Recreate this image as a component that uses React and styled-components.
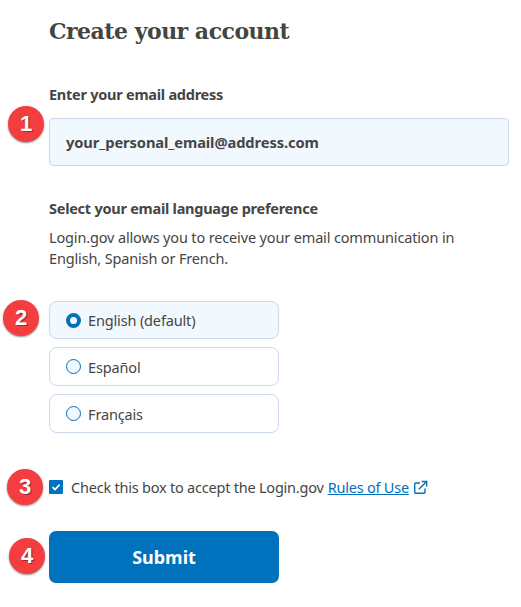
import styled, { createGlobalStyle } from "styled-components"

const GlobalStyle = createGlobalStyle`
  html, body {
    margin: 0;
    padding: 0;
    background: #fff;
  }
`

const options = [
  { label: "English (default)", checked: true },
  { label: "Español" },
  { label: "Français" },
]

export default function App() {
  return (
    <>
      <GlobalStyle />
      <Page>
        <Title>Create your account</Title>

        <EmailField>
          <Label>Enter your email address</Label>
          <EmailBox>
            <Badge $left={-42} $top={-13}>1</Badge>
            your_personal_email@address.com
          </EmailBox>
        </EmailField>

        <LanguageField>
          <Label>Select your email language preference</Label>
          <Hint>
            Login.gov allows you to receive your email communication in
            <br />
            English, Spanish or French.
          </Hint>
          <Options>
            {options.map((item, i) => (
              <Option key={item.label} $checked={item.checked}>
                {i === 0 && <Badge $left={-47} $top={-2}>2</Badge>}
                <RadioDot $checked={item.checked} />
                {item.label}
              </Option>
            ))}
          </Options>
        </LanguageField>

        <TermsRow>
          <Badge $left={-42} $top={-7}>3</Badge>
          <CheckBox>
            <svg width="10" height="10" viewBox="0 0 10 10" fill="none">
              <path d="M1.5 5.2 4 7.5 8.6 2.6" stroke="#fff" strokeWidth="1.7" />
            </svg>
          </CheckBox>
          <span>Check this box to accept the Login.gov</span>
          <RulesLink href="#">Rules of Use</RulesLink>
          <svg width="15" height="15" viewBox="0 0 15 15" fill="none" stroke="#0071bc" strokeWidth="1.4">
            <path d="M7 3H2.7A1 1 0 0 0 1.7 4v8.3a1 1 0 0 0 1 1H11a1 1 0 0 0 1-1V8.5" />
            <path d="M5.8 9.3 13.2 1.9M8.7 1.5h5v5" />
          </svg>
        </TermsRow>

        <SubmitRow>
          <Badge $left={-40} $top={7}>4</Badge>
          <SubmitButton>Submit</SubmitButton>
        </SubmitRow>
      </Page>
    </>
  )
}

const Page = styled.div`
  width: 521px;
  height: 607px;
  box-sizing: border-box;
  padding: 14px 12px 0 49px;
  overflow: hidden;
  font-family: "Noto Sans", "Open Sans", sans-serif;
  color: #454545;
`

const Title = styled.h1`
  margin: 0;
  font-family: "DejaVu Serif", "Liberation Serif", serif;
  font-size: 22px;
  line-height: 34px;
  font-weight: 700;
  letter-spacing: -0.5px;
  color: #454540;
`

const EmailField = styled.div`
  margin-top: 35px;
`

const Label = styled.div`
  font-size: 14.5px;
  line-height: 22px;
  font-weight: 700;
  letter-spacing: -0.25px;
`

const EmailBox = styled.div`
  position: relative;
  margin-top: 13px;
  height: 48px;
  box-sizing: border-box;
  display: flex;
  align-items: center;
  padding-left: 16px;
  background: #f1f8fe;
  border: 1px solid #cbd8ec;
  border-radius: 4px;
  font-size: 14.7px;
  font-weight: 700;
  letter-spacing: -0.1px;
`

const LanguageField = styled.div`
  margin-top: 31px;
`

const Hint = styled.p`
  margin: 8px 0 0;
  font-size: 14.5px;
  line-height: 21px;
  letter-spacing: -0.15px;
`

const Options = styled.div`
  display: flex;
  flex-direction: column;
  gap: 8px;
  width: 230px;
  margin-top: 32px;
`

const Option = styled.div`
  position: relative;
  height: ${(p) => (p.$checked ? 38 : 39)}px;
  box-sizing: border-box;
  display: flex;
  align-items: center;
  gap: 7px;
  padding-left: 16px;
  background: ${(p) => (p.$checked ? "#f1f8fe" : "#fff")};
  border: 1px solid #cbd8ec;
  border-radius: 8px;
  font-size: 14.5px;
  letter-spacing: -0.15px;
`

const RadioDot = styled.span`
  width: 15px;
  height: 15px;
  box-sizing: border-box;
  border-radius: 50%;
  background: ${(p) => (p.$checked ? "#fff" : "#f1f8fe")};
  border: ${(p) => (p.$checked ? "4px" : "1.3px")} solid #0071bc;
`

const TermsRow = styled.div`
  position: relative;
  display: flex;
  align-items: center;
  gap: 4px;
  margin-top: 43px;
  height: 22px;
  font-size: 14.5px;
  letter-spacing: -0.22px;
  white-space: nowrap;
`

const CheckBox = styled.span`
  width: 14px;
  height: 14px;
  margin-right: 4px;
  display: flex;
  align-items: center;
  justify-content: center;
  background: #0071bc;
  border-radius: 1px;
`

const RulesLink = styled.a`
  color: #0071bc;
`

const SubmitRow = styled.div`
  position: relative;
  margin-top: 33px;
`

const SubmitButton = styled.button`
  display: block;
  width: 230px;
  height: 52px;
  border: 0;
  border-radius: 7px;
  background: #0071bc;
  color: #fff;
  font-family: inherit;
  font-size: 18px;
  font-weight: 700;
`

const Badge = styled.span`
  position: absolute;
  left: ${(p) => p.$left}px;
  top: ${(p) => p.$top}px;
  width: 36px;
  height: 36px;
  display: flex;
  align-items: center;
  justify-content: center;
  border-radius: 50%;
  background: #f43d3f;
  box-shadow: 0 1px 2px rgba(0, 0, 0, 0.45);
  color: #fff;
  font-family: "Liberation Sans", sans-serif;
  font-size: 22px;
  font-weight: 700;
  letter-spacing: 0;
  text-shadow: 1px 1px 0 rgba(0, 0, 0, 0.35);
`
